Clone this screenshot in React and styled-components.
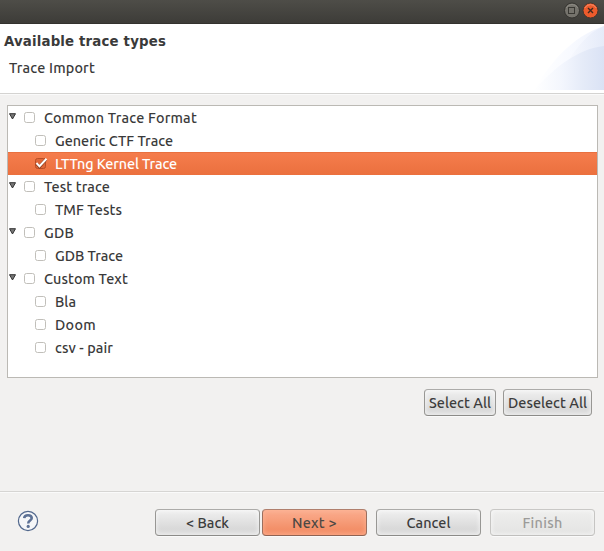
import React, { useLayoutEffect, useRef, useState } from 'react';
import styled, { createGlobalStyle, css } from 'styled-components';

const GlobalStyle = createGlobalStyle`
  * { box-sizing: border-box; }
  body { margin: 0; background: #f2f1f0; overflow: hidden; }
`;

const Dialog = styled.div`
  display: flex;
  flex-direction: column;
  width: 604px;
  height: 551px;
  background: #f2f1f0;
  color: #3a3a3a;
  font: 500 14.4px/20px Ubuntu, "Noto Sans", sans-serif;
`;

const TitleBar = styled.div`
  display: flex;
  justify-content: flex-end;
  gap: 2px;
  height: 24px;
  padding: 2px 5px 0 0;
  background: linear-gradient(#4e4d48, #3d3c38);
  border-bottom: 1px solid #33322e;
`;

const Header = styled.header`
  display: flex;
  justify-content: space-between;
  height: 70px;
  background: #fff;
  border-bottom: 1px solid #d4d3d1;
  box-shadow: 0 1px #fafafa;
`;

const HeaderText = styled.div`
  padding: 8px 0 0 4px;
`;

const Title = styled.div`
  font: bold 13.33px/20px "DejaVu Sans", sans-serif;
`;

const Subtitle = styled.div`
  padding: 6px 0 0 5px;
`;

const Tree = styled.div`
  height: 273px;
  margin: 11px 6px 0 7px;
  background: #fff;
  border: 1px solid #bbb9b4;
`;

const TreeRow = styled.div`
  display: flex;
  align-items: center;
  height: 23px;
  padding-left: ${(p) => (p.$child ? 27 : 1)}px;
  ${(p) => p.$selected && css`
    color: #fff;
    background: linear-gradient(#f57d4d, #eb703e);
    box-shadow: inset 0 1px #e9703f;
  `}
`;

const RowLabel = styled.span`
  margin-left: 8px;
`;

const Expander = styled.svg`
  width: 7px;
  height: 7px;
  margin: -2px 8px 0 0;
`;

const CheckBox = styled.svg`
  width: 13px;
  height: 13px;
  margin-left: -1px;
  overflow: visible;
`;

const TreeActions = styled.div`
  display: flex;
  justify-content: flex-end;
  gap: 7px;
  padding: 11px 12px 0 0;
`;

const Button = styled.button`
  width: ${(p) => p.$width}px;
  height: 27px;
  padding: 1px 0 0;
  margin: 0;
  font: inherit;
  line-height: 24px;
  color: #3c3c3c;
  white-space: nowrap;
  border: 1px solid;
  border-color: #acaba9 #989794 #8c8b88;
  border-radius: 4px;
  background: linear-gradient(#f0f0f0, #d9d9d9 75%, #dddddd);
  box-shadow: inset 0 0 4px 1px rgba(255, 255, 255, 0.55), 0 1px #fafafa;
  ${(p) => p.$primary && css`
    color: #4c4844;
    border-color: #b07f6d #9b6f5e #8e6353;
    background: linear-gradient(#fbae90, #f39069 75%, #f5936d);
    box-shadow: inset 0 0 4px 1px rgba(255, 185, 155, 0.6), 0 1px #fafafa;
  `}
  &:disabled {
    color: #9c9b99;
    border-color: #c9c8c6 #c6c5c3 #c0bfbd;
    background: linear-gradient(#eeeeed, #e4e4e3);
  }
`;

const Footer = styled.footer`
  display: flex;
  align-items: flex-start;
  height: 60px;
  margin-top: auto;
  padding: 17px 9px 0 17px;
  border-top: 1px solid #d6d5d3;
  box-shadow: inset 0 1px #fafafa;
`;

const HelpIcon = styled.svg`
  width: 22px;
  height: 22px;
  margin-top: 1px;
`;

const StepButtons = styled.div`
  display: flex;
  gap: 2px;
  margin: 0 9px 0 auto;
`;

const EndButtons = styled.div`
  display: flex;
  gap: 9px;
`;

const Fitted = styled.span`
  display: inline-block;
  white-space: pre;
`;

function FitText({ text, width }) {
  const ref = useRef(null);
  const [spacing, setSpacing] = useState(0);
  useLayoutEffect(() => {
    const natural = ref.current.getBoundingClientRect().width;
    setSpacing((width - natural) / text.length);
  }, [text, width]);
  return <Fitted ref={ref} style={{ letterSpacing: spacing }}>{text}</Fitted>;
}

function WindowButtons() {
  return (
    <>
      <svg width="16" height="17" viewBox="0 0 16 17">
        <circle cx="8" cy="8.5" r="7.5" fill="#75736c" stroke="#34332f" />
        <path d="M2.2 6A6.5 6.5 0 0 1 13.8 6" fill="none" stroke="#8c8a83" />
        <rect x="4.5" y="5.5" width="6" height="6" fill="none" stroke="#393833" />
      </svg>
      <svg width="17" height="17" viewBox="0 0 17 17">
        <circle cx="8.5" cy="8.5" r="7.5" fill="#ed5b2c" stroke="#45362e" />
        <path d="M2.8 6A6.5 6.5 0 0 1 14.2 6" fill="none" stroke="#f58b68" />
        <path d="M6 6l5 5m0-5l-5 5" stroke="#40291f" strokeWidth="1.4" />
      </svg>
    </>
  );
}

function Banner() {
  return (
    <svg width="72" height="66" viewBox="0 0 72 66">
      <defs>
        <linearGradient id="outer" gradientUnits="userSpaceOnUse" x1="4" y1="0" x2="72" y2="0">
          <stop offset="0" stopColor="#fff" />
          <stop offset=".5" stopColor="#f8faff" />
          <stop offset="1" stopColor="#eef2fc" />
        </linearGradient>
        <linearGradient id="wing" gradientUnits="userSpaceOnUse" x1="36" y1="0" x2="72" y2="0">
          <stop offset="0" stopColor="#f7f9fe" />
          <stop offset="1" stopColor="#e5ebf9" />
        </linearGradient>
        <linearGradient id="swoosh" gradientUnits="userSpaceOnUse" x1="2" y1="0" x2="72" y2="0">
          <stop offset="0" stopColor="#fff" />
          <stop offset=".4" stopColor="#f3f6fd" />
          <stop offset=".7" stopColor="#e5ebf8" />
          <stop offset="1" stopColor="#dae2f5" />
        </linearGradient>
      </defs>
      <path d="M2 66C18 39 39 13 72 2V66Z" fill="url(#outer)" />
      <path d="M36 37C45 24 55 9 72 2V25Q52 27 36 37Z" fill="url(#wing)" />
      <path d="M2 66C24 42 46 25 72 22V66Z" fill="url(#swoosh)" />
    </svg>
  );
}

function Check({ checked }) {
  return (
    <CheckBox viewBox="0 0 13 13">
      <rect x="1.5" y="1.5" width="10" height="10" rx="2" fill={checked ? '#df6638' : '#fff'} stroke={checked ? '#b94e26' : '#c1bfba'} />
      {checked && (
        <>
          <path d="M2.5 6.5l3 3.3L12 2.2" fill="none" stroke="#893b1d" strokeWidth="3" />
          <path d="M2.5 6l3 3.3L12.5 1.7" fill="none" stroke="#fff" strokeWidth="2" />
        </>
      )}
    </CheckBox>
  );
}

const rows = [
  { text: 'Common Trace Format', width: 153 },
  { text: 'Generic CTF Trace', width: 118, child: true },
  { text: 'LTTng Kernel Trace', width: 122, child: true, checked: true },
  { text: 'Test trace', width: 66 },
  { text: 'TMF Tests', width: 67, child: true },
  { text: 'GDB', width: 30 },
  { text: 'GDB Trace', width: 68, child: true },
  { text: 'Custom Text', width: 84 },
  { text: 'Bla', width: 21, child: true },
  { text: 'Doom', width: 41, child: true },
  { text: 'csv - pair', width: 58, child: true },
];

export default function App() {
  return (
    <Dialog>
      <GlobalStyle />
      <TitleBar><WindowButtons /></TitleBar>
      <Header>
        <HeaderText>
          <Title><FitText text="Available trace types" width={162} /></Title>
          <Subtitle><FitText text="Trace Import" width={86} /></Subtitle>
        </HeaderText>
        <Banner />
      </Header>
      <Tree>
        {rows.map((row) => (
          <TreeRow key={row.text} $child={row.child} $selected={row.checked}>
            {!row.child && (
              <Expander viewBox="0 0 7 7">
                <path d="M.5 .7h6L3.5 6Z" fill="#777" stroke="#333" />
              </Expander>
            )}
            <Check checked={row.checked} />
            <RowLabel><FitText text={row.text} width={row.width} /></RowLabel>
          </TreeRow>
        ))}
      </Tree>
      <TreeActions>
        <Button $width={72}><FitText text="Select All" width={62} /></Button>
        <Button $width={89}><FitText text="Deselect All" width={79} /></Button>
      </TreeActions>
      <Footer>
        <HelpIcon viewBox="0 0 22 22">
          <circle cx="11" cy="11" r="9.6" fill="#f5f6f8" stroke="#52688d" strokeWidth="1.2" />
          <path d="M7.2 8.2Q7.4 5.2 11 5.2T14.8 8.1C14.8 10.5 11.2 10.6 11.2 13.4" fill="none" stroke="#5d7195" strokeWidth="2.5" />
          <circle cx="11.2" cy="16.4" r="1.6" fill="#5d7195" />
        </HelpIcon>
        <StepButtons>
          <Button $width={105}><FitText text="< Back" width={43} /></Button>
          <Button $width={105} $primary><FitText text="Next >" width={45} /></Button>
        </StepButtons>
        <EndButtons>
          <Button $width={105}><FitText text="Cancel" width={44} /></Button>
          <Button $width={105} disabled><FitText text="Finish" width={40} /></Button>
        </EndButtons>
      </Footer>
    </Dialog>
  );
}
